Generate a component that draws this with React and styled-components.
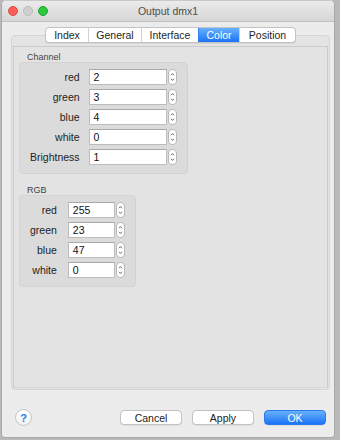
import React from 'react'
import styled, { createGlobalStyle, css } from 'styled-components';

const GlobalStyle = createGlobalStyle`
  html, body {
    margin: 0;
    padding: 0;
    background: #b9b9b9;
    font-family: "Liberation Sans", Arial, sans-serif;
  }
`;

const tabs = ['Index', 'General', 'Interface', 'Color', 'Position'];
const tabWidths = [42, 53, 57, 41, 56];

const channelRows = [
  ['red', '2'],
  ['green', '3'],
  ['blue', '4'],
  ['white', '0'],
  ['Brightness', '1'],
];

const rgbRows = [
  ['red', '255'],
  ['green', '23'],
  ['blue', '47'],
  ['white', '0'],
];

const Stepper = () => (
  <Spin>
    <svg width="9" height="16" viewBox="0 0 9 16">
      <path d="M3 6.2 L4.5 4.6 L6 6.2" fill="none" stroke="#555" strokeWidth="0.9" />
      <path d="M3 9.8 L4.5 11.4 L6 9.8" fill="none" stroke="#555" strokeWidth="0.9" />
    </svg>
  </Spin>
)

const FieldGroup = ({ title, rows, inputWidth, labelGap, first }) => (
  <Section $first={first}>
    <SectionTitle>{title}</SectionTitle>
    <Box>
      <Grid $gap={labelGap}>
        {rows.map(([label, value]) => (
          <React.Fragment key={label}>
            <Label>{label}</Label>
            <Field>
              <Input $w={inputWidth}>{value}</Input>
              <Stepper />
            </Field>
          </React.Fragment>
        ))}
      </Grid>
    </Box>
  </Section>
)

const App = () => {
  return (
    <>
      <GlobalStyle />
      <Window>
        <TitleBar>
          <Lights>
            <Light $c="#fc5f57" $b="#de4a42" />
            <Light $c="#cfcfcf" $b="#bcbcbc" />
            <Light $c="#2bc840" $b="#1ea431" />
          </Lights>
          <Title>Output dmx1</Title>
        </TitleBar>
        <Body>
          <TabStrip>
            {tabs.map((t, i) => (
              <Tab key={t} $w={tabWidths[i]} $active={t === 'Color'}>{t}</Tab>
            ))}
          </TabStrip>
          <Panel>
            <Frame>
              <FieldGroup title="Channel" rows={channelRows} inputWidth={78} labelGap={9} first />
              <FieldGroup title="RGB" rows={rgbRows} inputWidth={47} labelGap={11} />
            </Frame>
          </Panel>
        </Body>
        <Footer>
          <Help>?</Help>
          <Buttons>
            <Button>Cancel</Button>
            <Button>Apply</Button>
            <Button $primary>OK</Button>
          </Buttons>
        </Footer>
      </Window>
    </>
  )
}

const Window = styled.div`
  width: 334px;
  height: 438px;
  margin-left: 1px;
  box-sizing: border-box;
  background: #ececec;
  border: 1px solid #a9a9a9;
  border-top-color: #c9c9c9;
  border-radius: 5px 5px 4px 4px;
  display: flex;
  flex-direction: column;
  overflow: hidden;
`;

const TitleBar = styled.div`
  position: relative;
  height: 20px;
  flex-shrink: 0;
  background: linear-gradient(#ebebeb, #d6d6d6);
  border-bottom: 1px solid #c2c2c2;
  display: flex;
  align-items: center;
  justify-content: center;
`;

const Lights = styled.div`
  position: absolute;
  left: 6px;
  top: 5px;
  display: flex;
  gap: 5px;
`;

const Light = styled.span`
  width: 10px;
  height: 10px;
  border-radius: 50%;
  box-sizing: border-box;
  background: ${p => p.$c};
  border: 1px solid ${p => p.$b};
`;

const Title = styled.div`
  font-size: 10.5px;
  color: #4d4d4d;
`;

const Body = styled.div`
  padding: 5px 4px 0 9px;
  display: flex;
  flex-direction: column;
  align-items: center;
`;

const TabStrip = styled.div`
  position: relative;
  z-index: 1;
  display: flex;
  height: 16px;
  box-sizing: border-box;
  background: #fff;
  border: 1px solid #c3c3c3;
  border-radius: 4px;
  overflow: hidden;
  box-shadow: 0 0.5px 0.5px rgba(0,0,0,0.12);
`;

const Tab = styled.div`
  width: ${p => p.$w}px;
  box-sizing: border-box;
  display: flex;
  align-items: center;
  justify-content: center;
  font-size: 10.5px;
  color: #262626;
  & + & {
    border-left: 1px solid #d2d2d2;
  }
  ${p => p.$active && css`
    background: linear-gradient(#69b1fb, #1b73f6);
    color: #fff;
    border-left-color: #2f7ef5 !important;
  `}
`;

const Panel = styled.div`
  align-self: stretch;
  margin-top: -8px;
  height: 355px;
  box-sizing: border-box;
  background: #e4e4e4;
  border: 1px solid #d6d6d6;
  border-radius: 4px;
  padding: 10px 1px 1px 1px;
  display: flex;
`;

const Frame = styled.div`
  flex: 1;
  background: #e3e3e3;
  border: 1px solid #cbcbcb;
  border-bottom-color: #d8d8d8;
  padding: 5px 5px;
  display: flex;
  flex-direction: column;
  align-items: flex-start;
`;

const Section = styled.div`
  margin-top: ${p => (p.$first ? 0 : 11)}px;
  display: flex;
  flex-direction: column;
  align-items: flex-start;
`;

const SectionTitle = styled.div`
  font-size: 9px;
  line-height: 10px;
  color: #444;
  margin-left: 8px;
`;

const Box = styled.div`
  background: #dbdbdb;
  border: 1px solid #d3d3d3;
  border-radius: 4px;
  padding: 6px 10px 8px 10px;
`;

const Grid = styled.div`
  display: grid;
  grid-template-columns: auto auto;
  column-gap: ${p => p.$gap}px;
  row-gap: 4px;
  align-items: center;
`;

const Label = styled.div`
  font-size: 10.5px;
  color: #222;
  text-align: right;
`;

const Field = styled.div`
  display: flex;
  gap: 1px;
`;

const Input = styled.div`
  width: ${p => p.$w}px;
  height: 16px;
  box-sizing: border-box;
  background: #fff;
  border: 1px solid #bdbdbd;
  border-top-color: #a9a9a9;
  padding-left: 4px;
  font-size: 10.5px;
  line-height: 14px;
  color: #111;
`;

const Spin = styled.div`
  width: 9px;
  height: 16px;
  box-sizing: border-box;
  background: #fff;
  border: 1px solid #b9b9b9;
  border-radius: 4px;
  display: flex;
  align-items: center;
  justify-content: center;
  svg { display: block; margin: -1px; }
`;

const Footer = styled.div`
  flex: 1;
  display: flex;
  align-items: center;
  justify-content: space-between;
  padding: 8px 8px 0 13px;
`;

const Help = styled.div`
  width: 17px;
  height: 17px;
  box-sizing: border-box;
  border-radius: 50%;
  background: linear-gradient(#fff, #f2f2f2);
  border: 1px solid #c4c4c4;
  color: #2b7bf0;
  font-size: 11px;
  font-weight: bold;
  display: flex;
  align-items: center;
  justify-content: center;
`;

const Buttons = styled.div`
  display: flex;
  gap: 10px;
`;

const Button = styled.div`
  width: 62px;
  height: 15px;
  box-sizing: border-box;
  border-radius: 4px;
  display: flex;
  align-items: center;
  justify-content: center;
  font-size: 10.5px;
  background: #fff;
  color: #222;
  border: 1px solid #c3c3c3;
  box-shadow: 0 0.5px 0.5px rgba(0,0,0,0.12);
  ${p => p.$primary && css`
    background: linear-gradient(#69b1fb, #1b73f6);
    border-color: #2a78ee;
    color: #fff;
  `}
`;

export default App
